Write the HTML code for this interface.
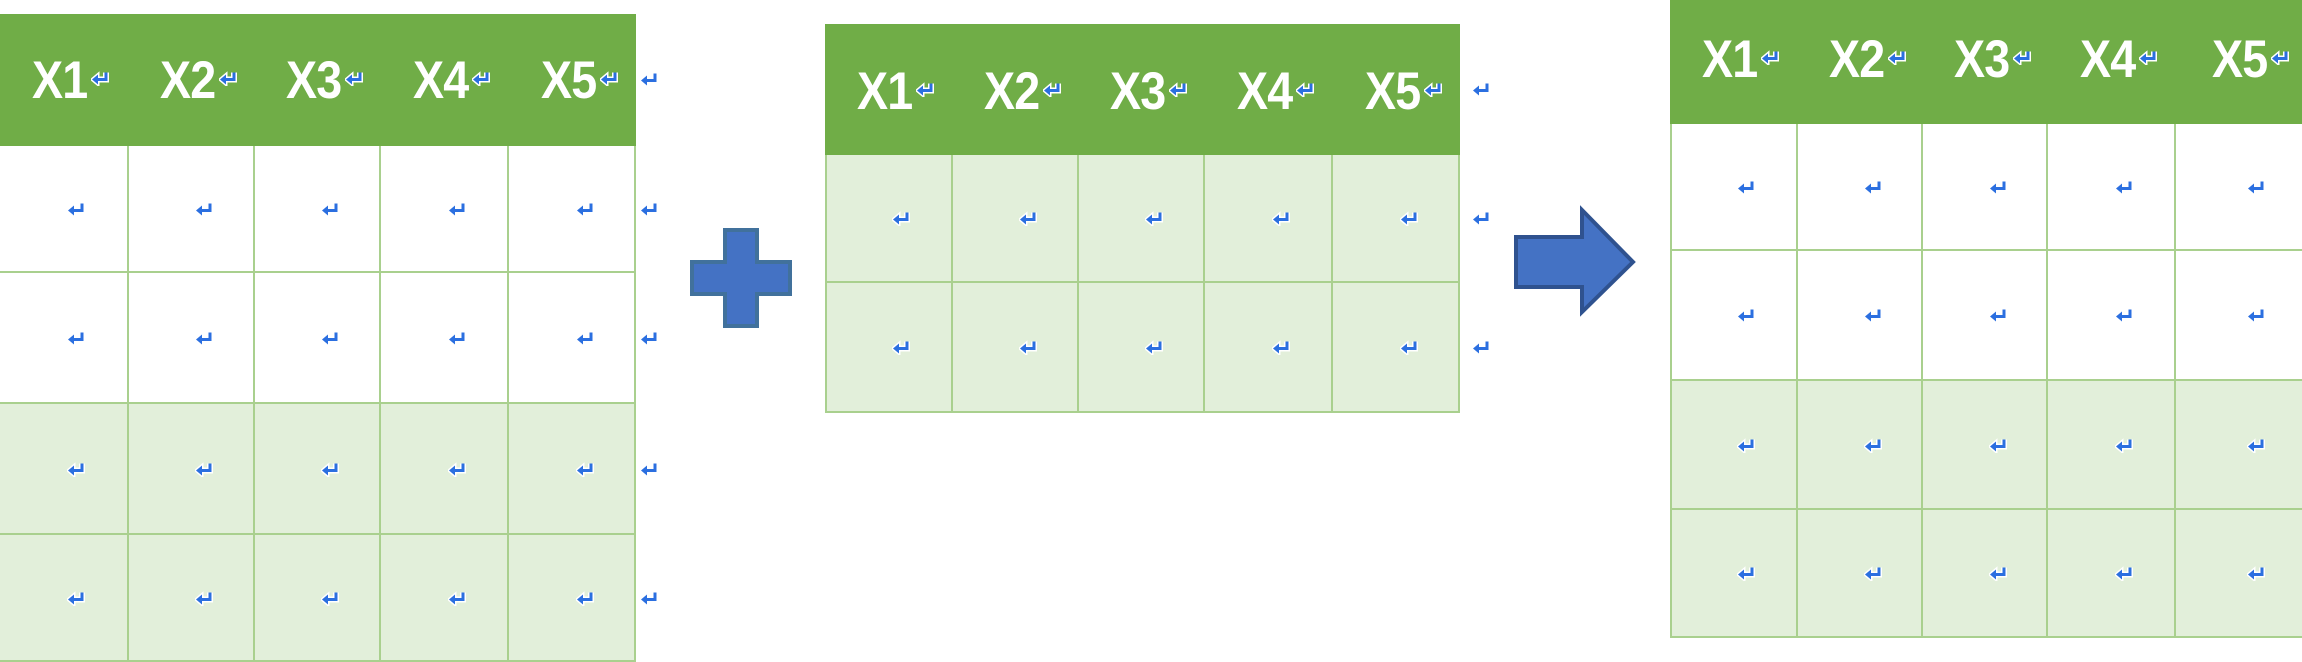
<!DOCTYPE html>
<html><head><meta charset="utf-8"><style>
*{margin:0;padding:0;box-sizing:border-box}
body{width:2302px;height:662px;background:#fff;position:relative;overflow:hidden;font-family:"Liberation Sans",sans-serif}
.hdr{position:absolute;background:#70ad47}
.c{position:absolute;background:#fff;border-right:2px solid #a9d08e;border-bottom:2px solid #a9d08e}
.g{background:#e2efda}
.h{position:absolute;color:#fff;font-weight:bold;font-size:53px;letter-spacing:-1px;line-height:1;white-space:nowrap;transform:scaleX(.88);transform-origin:left top}
.r{position:absolute;width:20px;height:15px}
</style></head><body>
<svg width="0" height="0" style="position:absolute"><defs>
<symbol id="rm" viewBox="0 0 20 15"><path d="M15 1.5 V8.5 H6" fill="none" stroke="#2b6fe0" stroke-width="3"/><path d="M1 8.5 L7 3.5 V13.5 Z" fill="#2b6fe0"/></symbol>
<symbol id="rw" viewBox="0 0 20 15"><path d="M15 1.5 V8.5 H6" fill="none" stroke="#fff" stroke-width="6"/><path d="M1 8.5 L7 3.5 V13.5 Z" fill="#fff" stroke="#fff" stroke-width="3"/><path d="M15 1.5 V8.5 H6" fill="none" stroke="#2b6fe0" stroke-width="3"/><path d="M1 8.5 L7 3.5 V13.5 Z" fill="#2b6fe0"/></symbol>
</defs></svg>
<svg style="position:absolute;left:688px;top:227px" width="108" height="102"><path d="M37 3 H69 V35 H102 V67 H69 V99 H37 V67 H4 V35 H37 Z" fill="#4472c4" stroke="#41719c" stroke-width="4"/></svg>
<svg style="position:absolute;left:1512px;top:205px" width="126" height="112"><path d="M4 32 H70 V5 L121 57 L70 107 V82 H4 Z" fill="#4472c4" stroke="#2f528f" stroke-width="4"/></svg>
<script>
function table(left,top,cols,hdrH,rows,shade,headerY,outside){
  var b=document.body,h='';
  var W=cols[cols.length-1]-left;
  h+='<div class="hdr" style="left:'+left+'px;top:'+top+'px;width:'+W+'px;height:'+hdrH+'px"></div>';
  var xs=[left].concat(cols);
  for(var i=0;i<5;i++){
    var cx=(xs[i]+xs[i+1])/2;
    h+='<div class="h" style="left:'+(cx-32)+'px;top:'+headerY+'px">X'+(i+1)+'</div>';
    h+='<svg class="r" style="left:'+(cx+27)+'px;top:'+(headerY+17)+'px"><use href="#rw"/></svg>';
  }
  var ys=[top+hdrH].concat(rows);
  for(var r=0;r<rows.length;r++){
    for(var i=0;i<5;i++){
      var x0=xs[i],x1=xs[i+1],y0=ys[r],y1=ys[r+1];
      h+='<div class="c'+(shade[r]?' g':'')+'" style="left:'+x0+'px;top:'+y0+'px;width:'+(x1-x0)+'px;height:'+(y1-y0)+'px;'+(i==0?'border-left:2px solid #a9d08e;':'')+'"></div>';
      h+='<svg class="r" style="left:'+((x0+x1)/2+3)+'px;top:'+((y0+y1)/2-8)+'px"><use href="#'+(shade[r]?'rw':'rm')+'"/></svg>';
    }
    if(outside) h+='<svg class="r" style="left:'+outside+'px;top:'+((ys[r]+ys[r+1])/2-8)+'px"><use href="#rm"/></svg>';
  }
  if(outside) h+='<svg class="r" style="left:'+outside+'px;top:'+(top+hdrH/2-8)+'px"><use href="#rm"/></svg>';
  b.insertAdjacentHTML('beforeend',h);
}
table(-2,14,[129,255,381,509,636],132,[273,404,535,662],[0,0,1,1],54,640);
table(825,24,[953,1079,1205,1333,1460],131,[283,413],[1,1],65,1472);
table(1670,0,[1798,1923,2048,2176,2312],124,[251,381,510,638],[0,0,1,1],33,0);
</script>
</body></html>
